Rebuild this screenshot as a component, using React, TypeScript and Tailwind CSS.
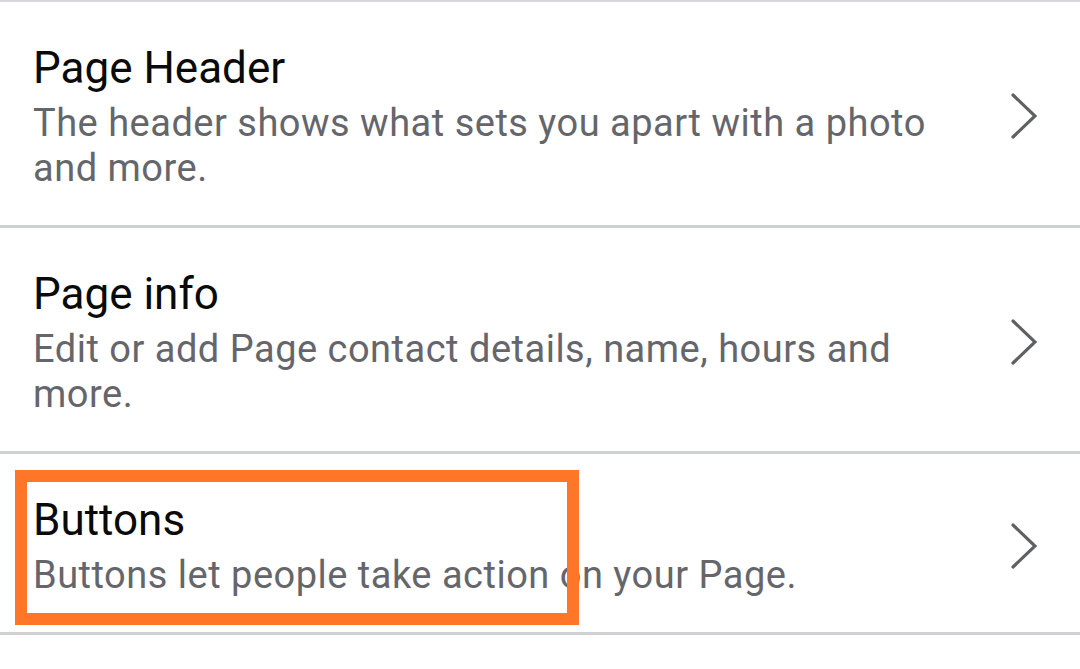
import React from "react";

type Item = {
  title: string;
  desc: string;
  marked?: boolean;
};

const items: Item[] = [
  {
    title: "Page Header",
    desc: "The header shows what sets you apart with a photo and more.",
  },
  {
    title: "Page info",
    desc: "Edit or add Page contact details, name, hours and more.",
  },
  {
    title: "Buttons",
    desc: "Buttons let people take action on your Page.",
    marked: true,
  },
];

const Chevron = () => (
  <svg width="26" height="46" viewBox="0 0 26 46" fill="none" className="shrink-0">
    <polyline
      points="2,2 24,23 2,44"
      stroke="#5f6064"
      strokeWidth="3.2"
      strokeLinecap="round"
      strokeLinejoin="miter"
    />
  </svg>
);

const SettingRow = ({ item }: { item: Item }) => (
  <div className="relative flex items-center border-b-[3px] border-[#cfd0d3] pt-[39px] pb-[34px] pl-[33px] pr-[43px]">
    <div className="flex-1 min-w-0 pr-[50px]">
      <p className="text-[44px] leading-[54px] text-[#0a0a0a] mb-[6px]">{item.title}</p>
      <p className="text-[38px] leading-[45px] tracking-[0.5px] text-[#65666b]">{item.desc}</p>
    </div>
    <Chevron />
    {item.marked && (
      <div className="absolute left-[15px] top-[16px] w-[564px] h-[155px] border-[12px] border-[#ff7629]" />
    )}
  </div>
);

export default function App() {
  return (
    <div
      className="w-[1080px] h-[669px] bg-white overflow-hidden border-t-2 border-[#d6d7da]"
      style={{ fontFamily: "Roboto, 'Noto Sans', sans-serif" }}
    >
      {items.map((item) => (
        <SettingRow key={item.title} item={item} />
      ))}
    </div>
  );
}
